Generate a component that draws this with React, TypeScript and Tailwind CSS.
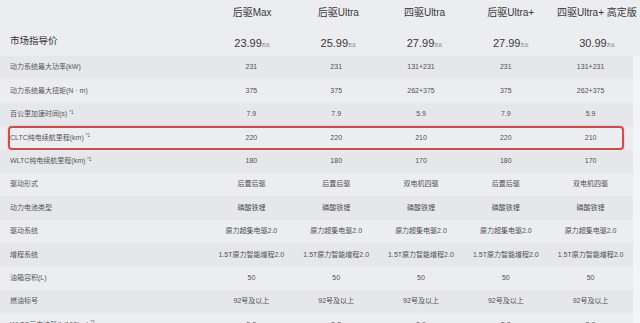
const models = ["后驱Max", "后驱Ultra", "四驱Ultra", "后驱Ultra+", "四驱Ultra+ 高定版"];
const prices = ["23.99", "25.99", "27.99", "27.99", "30.99"];

type Row = { label: string; note?: boolean; values: string[]; boxed?: boolean };

const rows: Row[] = [
  { label: "动力系统最大功率(kW)", values: ["231", "231", "131+231", "231", "131+231"] },
  { label: "动力系统最大扭矩(N · m)", values: ["375", "375", "262+375", "375", "262+375"] },
  { label: "百公里加速时间(s)", note: true, values: ["7.9", "7.9", "5.9", "7.9", "5.9"] },
  { label: "CLTC纯电续航里程(km)", note: true, boxed: true, values: ["220", "220", "210", "220", "210"] },
  { label: "WLTC纯电续航里程(km)", note: true, values: ["180", "180", "170", "180", "170"] },
  { label: "驱动形式", values: ["后置后驱", "后置后驱", "双电机四驱", "后置后驱", "双电机四驱"] },
  { label: "动力电池类型", values: Array(5).fill("磷酸铁锂") },
  { label: "驱动系统", values: Array(5).fill("原力超集电驱2.0") },
  { label: "增程系统", values: Array(5).fill("1.5T原力智能增程2.0") },
  { label: "油箱容积(L)", values: Array(5).fill("50") },
  { label: "燃油标号", values: Array(5).fill("92号及以上") },
  { label: "WLTC亏电油耗(L/100km)", note: true, values: ["5.8", "5.8", "5.9", "5.8", "5.9"] },
];

export default function App() {
  return (
    <div
      className="w-[640px] h-[323px] overflow-hidden bg-[#ecedf0] text-[#4b4b4d]"
      style={{ fontFamily: '"Liberation Sans", "Noto Sans CJK SC", sans-serif' }}
    >
      <div className="grid grid-cols-[209px_repeat(5,1fr)] h-[27px] items-center pb-[3px]">
        <div />
        {models.map((m) => (
          <div key={m} className="text-center text-[10px] text-[#38383a] whitespace-nowrap">
            {m}
          </div>
        ))}
      </div>

      <div className="grid grid-cols-[209px_repeat(5,1fr)] h-[29px] items-center">
        <div className="pl-[10px] text-[9.5px] text-[#2f2f31]">市场指导价</div>
        {prices.map((p, i) => (
          <div key={i} className="text-center text-[#38383a] whitespace-nowrap">
            <span className="text-[11px]">{p}</span>
            <span className="text-[4px] align-baseline">万元</span>
          </div>
        ))}
      </div>

      <div className="pr-[7px] bg-[#f3f4f6]">
        {rows.map((r, i) => (
          <div
            key={r.label}
            className={`relative grid grid-cols-[209px_repeat(5,1fr)] h-[23.4px] items-center text-[7px] ${
              i % 2 === 0 ? "bg-[#e6e7ea]" : "bg-[#ecedf0]"
            }`}
          >
            <div className="pl-[10px] whitespace-nowrap text-[#555558]">
              {r.label}
              {r.note && <sup className="text-[4.5px] ml-[2px]">*1</sup>}
            </div>
            {r.values.map((v, j) => (
              <div key={j} className="text-center whitespace-nowrap text-[#505053]">
                {v}
              </div>
            ))}
            {r.boxed && (
              <div className="absolute left-[8px] right-[9px] top-[0px] bottom-[0px] border-2 border-[#cc4f49] rounded-[4px] shadow-[0_0_2px_rgba(220,90,90,0.5)]" />
            )}
          </div>
        ))}
      </div>
    </div>
  );
}
